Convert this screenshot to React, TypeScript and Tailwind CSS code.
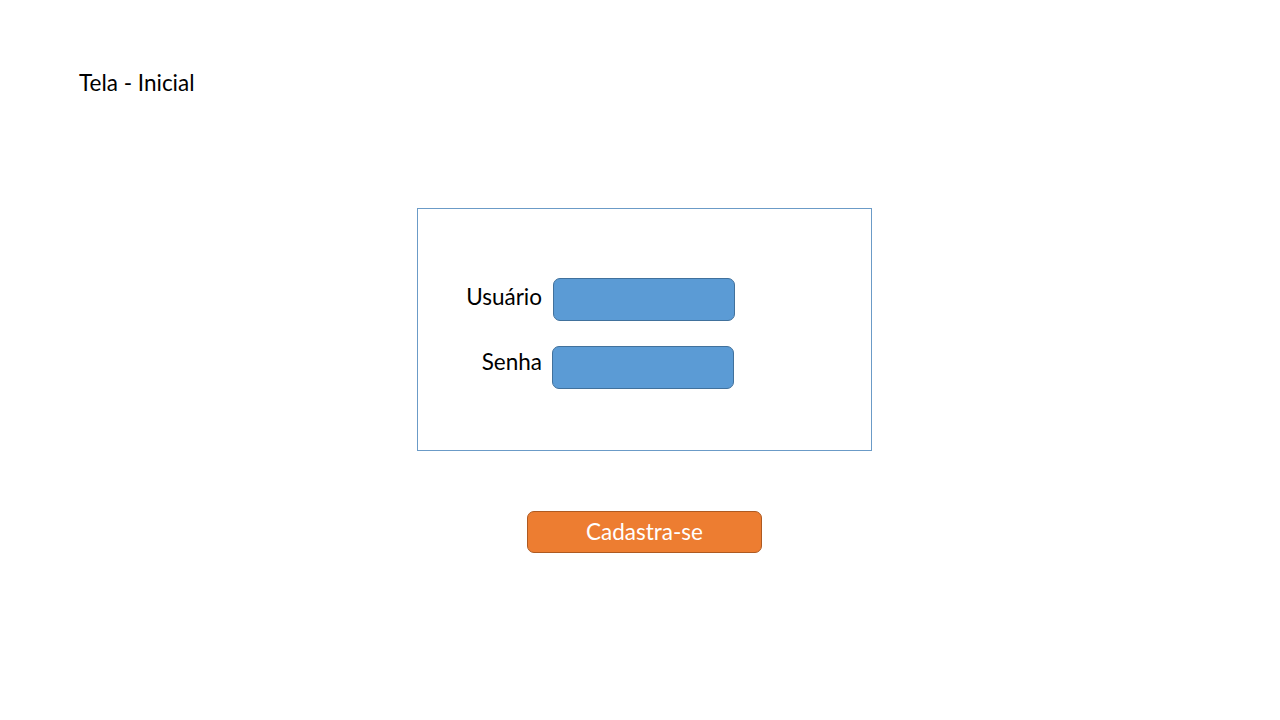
export default function App() {
	return (
		<div className="w-full h-[720px] bg-white font-['Lato',sans-serif] text-black">
			{/* Slide title */}
			<div className="pt-[69px] pl-[79px]">
				<h1 className="text-[22.5px] leading-[28px]">Tela - Inicial</h1>
			</div>

			{/* Login area */}
			<div className="ml-[417px] mt-[111px] w-[455px] flex flex-col items-center">
				<div className="w-full h-[243px] border border-[#6b9bc7] pt-[69px]">
					<div className="flex items-start">
						<label className="w-[124px] text-right text-[22.5px] leading-[28px] mt-[5px]">Usuário</label>
						<div className="ml-[11px] w-[182px] h-[43px] rounded-[7px] bg-[#5b9bd5] border border-[#41719c]"></div>
					</div>
					<div className="flex items-start mt-[25px]">
						<label className="w-[124px] text-right text-[22.5px] leading-[28px] mt-[2px]">Senha</label>
						<div className="ml-[10px] w-[182px] h-[43px] rounded-[7px] bg-[#5b9bd5] border border-[#41719c]"></div>
					</div>
				</div>

				<button className="mt-[60px] w-[235px] h-[42px] rounded-[7px] bg-[#ed7d31] border border-[#ae5a21] text-white text-[22.5px] leading-[28px]">
					Cadastra-se
				</button>
			</div>
		</div>
	);
}
